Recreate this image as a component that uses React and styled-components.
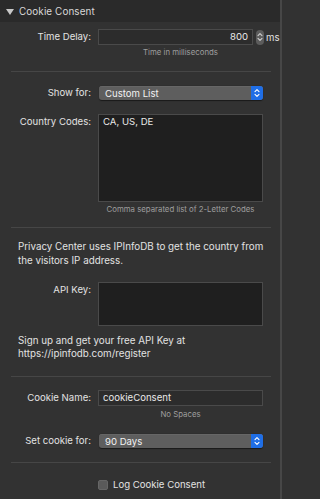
import React from 'react';
import styled, { createGlobalStyle } from 'styled-components';

const GlobalStyle = createGlobalStyle`
  html, body {
    margin: 0;
    padding: 0;
    background: #323232;
  }
  body {
    font-family: Inter, "Noto Sans", "Liberation Sans", sans-serif;
    -webkit-font-smoothing: antialiased;
  }
`;

const Panel = styled.div`
  width: 282px;
  height: 499px;
  box-sizing: border-box;
  background: #323232;
  border-right: 2px solid #474747;
  overflow: hidden;
`;

const Header = styled.div`
  height: 22px;
  display: flex;
  align-items: center;
  gap: 5px;
  padding-left: 6px;
  background: #2a2a2a;
  color: #d8d8d8;
  font-size: 9.9px;
  letter-spacing: 0.1px;
`;

const Triangle = styled.span`
  width: 0;
  height: 0;
  border-left: 4px solid transparent;
  border-right: 4px solid transparent;
  border-top: 6px solid #c8c8c8;
  margin-top: 1px;
`;

const Body = styled.div`
  display: flex;
  flex-direction: column;
`;

const Row = styled.div`
  display: grid;
  grid-template-columns: 91px 1fr;
  column-gap: 7px;
  align-items: ${(p) => (p.$top ? 'start' : 'center')};
  padding-right: ${(p) => (p.$wide ? 2 : 17)}px;
  margin-top: ${(p) => p.$mt || 0}px;
`;

const Label = styled.label`
  text-align: right;
  color: #e2e2e2;
  font-size: 9.6px;
  line-height: 14px;
  white-space: nowrap;
  padding-top: ${(p) => (p.$top ? '1px' : '0')};
`;

const Helper = styled.div`
  margin-left: 98px;
  margin-right: 17px;
  margin-top: ${(p) => p.$mt || 1}px;
  text-align: center;
  color: #9e9e9e;
  font-size: 7.8px;
  line-height: 12px;
`;

const Separator = styled.hr`
  margin: ${(p) => p.$mt}px 9px 0 11px;
  border: 0;
  height: 1px;
  background: #464646;
`;

const TextField = styled.div`
  height: ${(p) => p.$h || 16}px;
  box-sizing: border-box;
  background: ${(p) => (p.$dark ? '#1f1f1f' : '#2c2c2c')};
  border: 1px solid #4a4a4a;
  color: #e8e8e8;
  font-size: 9.6px;
  line-height: 14px;
  padding: 0 4px;
  text-align: ${(p) => (p.$right ? 'right' : 'left')};
`;

const NumberField = styled(TextField)`
  flex: 0 0 155px;
`;

const NumberWrap = styled.div`
  display: flex;
  align-items: center;
`;

const Stepper = styled.div`
  width: 8px;
  height: 15px;
  margin-left: 3px;
  border-radius: 4px;
  background: #5c5c5c;
  display: flex;
  align-items: center;
  justify-content: center;
`;

const Unit = styled.span`
  margin-left: 2px;
  color: #e2e2e2;
  font-size: 9.6px;
`;

const Popup = styled.div`
  height: 14px;
  margin-left: 1px;
  border-radius: 3px;
  background: #5e5e5e;
  box-shadow: inset 0 0.5px 0 #6e6e6e, 0 0.5px 1px rgba(0, 0, 0, 0.5);
  display: flex;
  align-items: center;
  overflow: hidden;
`;

const PopupText = styled.span`
  flex: 1;
  padding-left: 6px;
  color: #f2f2f2;
  font-size: 9.6px;
`;

const PopupCap = styled.span`
  width: 12px;
  height: 14px;
  background: #1f6ee6;
  display: flex;
  align-items: center;
  justify-content: center;
`;

const Paragraph = styled.p`
  margin: ${(p) => p.$mt}px 8px 0 18px;
  color: #e2e2e2;
  font-size: 9.8px;
  line-height: ${(p) => p.$lh || 14}px;
`;

const CheckRow = styled.label`
  display: flex;
  align-items: center;
  gap: 5px;
  margin: 15px 0 0 98px;
  color: #e2e2e2;
  font-size: 9.6px;
  line-height: 14px;
`;

const CheckBox = styled.span`
  width: 10px;
  height: 10px;
  box-sizing: border-box;
  border-radius: 2px;
  background: #5a5a5a;
  border: 1px solid #666;
`;

const Chevrons = ({ color }) => (
  <svg width="6" height="10" viewBox="0 0 6 10" fill="none" stroke={color} strokeWidth="1.1" strokeLinecap="round" strokeLinejoin="round">
    <path d="M1 3.6 L3 1.6 L5 3.6" />
    <path d="M1 6.4 L3 8.4 L5 6.4" />
  </svg>
);

const Select = ({ value }) => (
  <Popup>
    <PopupText>{value}</PopupText>
    <PopupCap>
      <Chevrons color="#ffffff" />
    </PopupCap>
  </Popup>
);

export default function App() {
  return (
    <Panel>
      <GlobalStyle />
      <Header>
        <Triangle />
        Cookie Consent
      </Header>
      <Body>
        <Row $mt={7} $wide>
          <Label>Time Delay:</Label>
          <NumberWrap>
            <NumberField $right>800</NumberField>
            <Stepper>
              <Chevrons color="#d0d0d0" />
            </Stepper>
            <Unit>ms</Unit>
          </NumberWrap>
        </Row>
        <Helper $mt={1}>Time in milliseconds</Helper>
        <Separator $mt={13} />

        <Row $mt={14}>
          <Label>Show for:</Label>
          <Select value="Custom List" />
        </Row>

        <Row $mt={14} $top>
          <Label $top>Country Codes:</Label>
          <TextField $h={88} $dark>CA, US, DE</TextField>
        </Row>
        <Helper $mt={1}>Comma separated list of 2-Letter Codes</Helper>
        <Separator $mt={12} />

        <Paragraph $mt={12}>
          Privacy Center uses IPInfoDB to get the country from the visitors IP address.
        </Paragraph>
        <Row $mt={14} $top>
          <Label $top>API Key:</Label>
          <TextField $h={44} $dark />
        </Row>
        <Paragraph $mt={8} $lh={13}>
          Sign up and get your free API Key at https://ipinfodb.com/register
        </Paragraph>
        <Separator $mt={16} />

        <Row $mt={13}>
          <Label>Cookie Name:</Label>
          <TextField>cookieConsent</TextField>
        </Row>
        <Helper $mt={2}>No Spaces</Helper>

        <Row $mt={14}>
          <Label>Set cookie for:</Label>
          <Select value="90 Days" />
        </Row>
        <Separator $mt={14} />

        <CheckRow>
          <CheckBox />
          Log Cookie Consent
        </CheckRow>
      </Body>
    </Panel>
  );
}
